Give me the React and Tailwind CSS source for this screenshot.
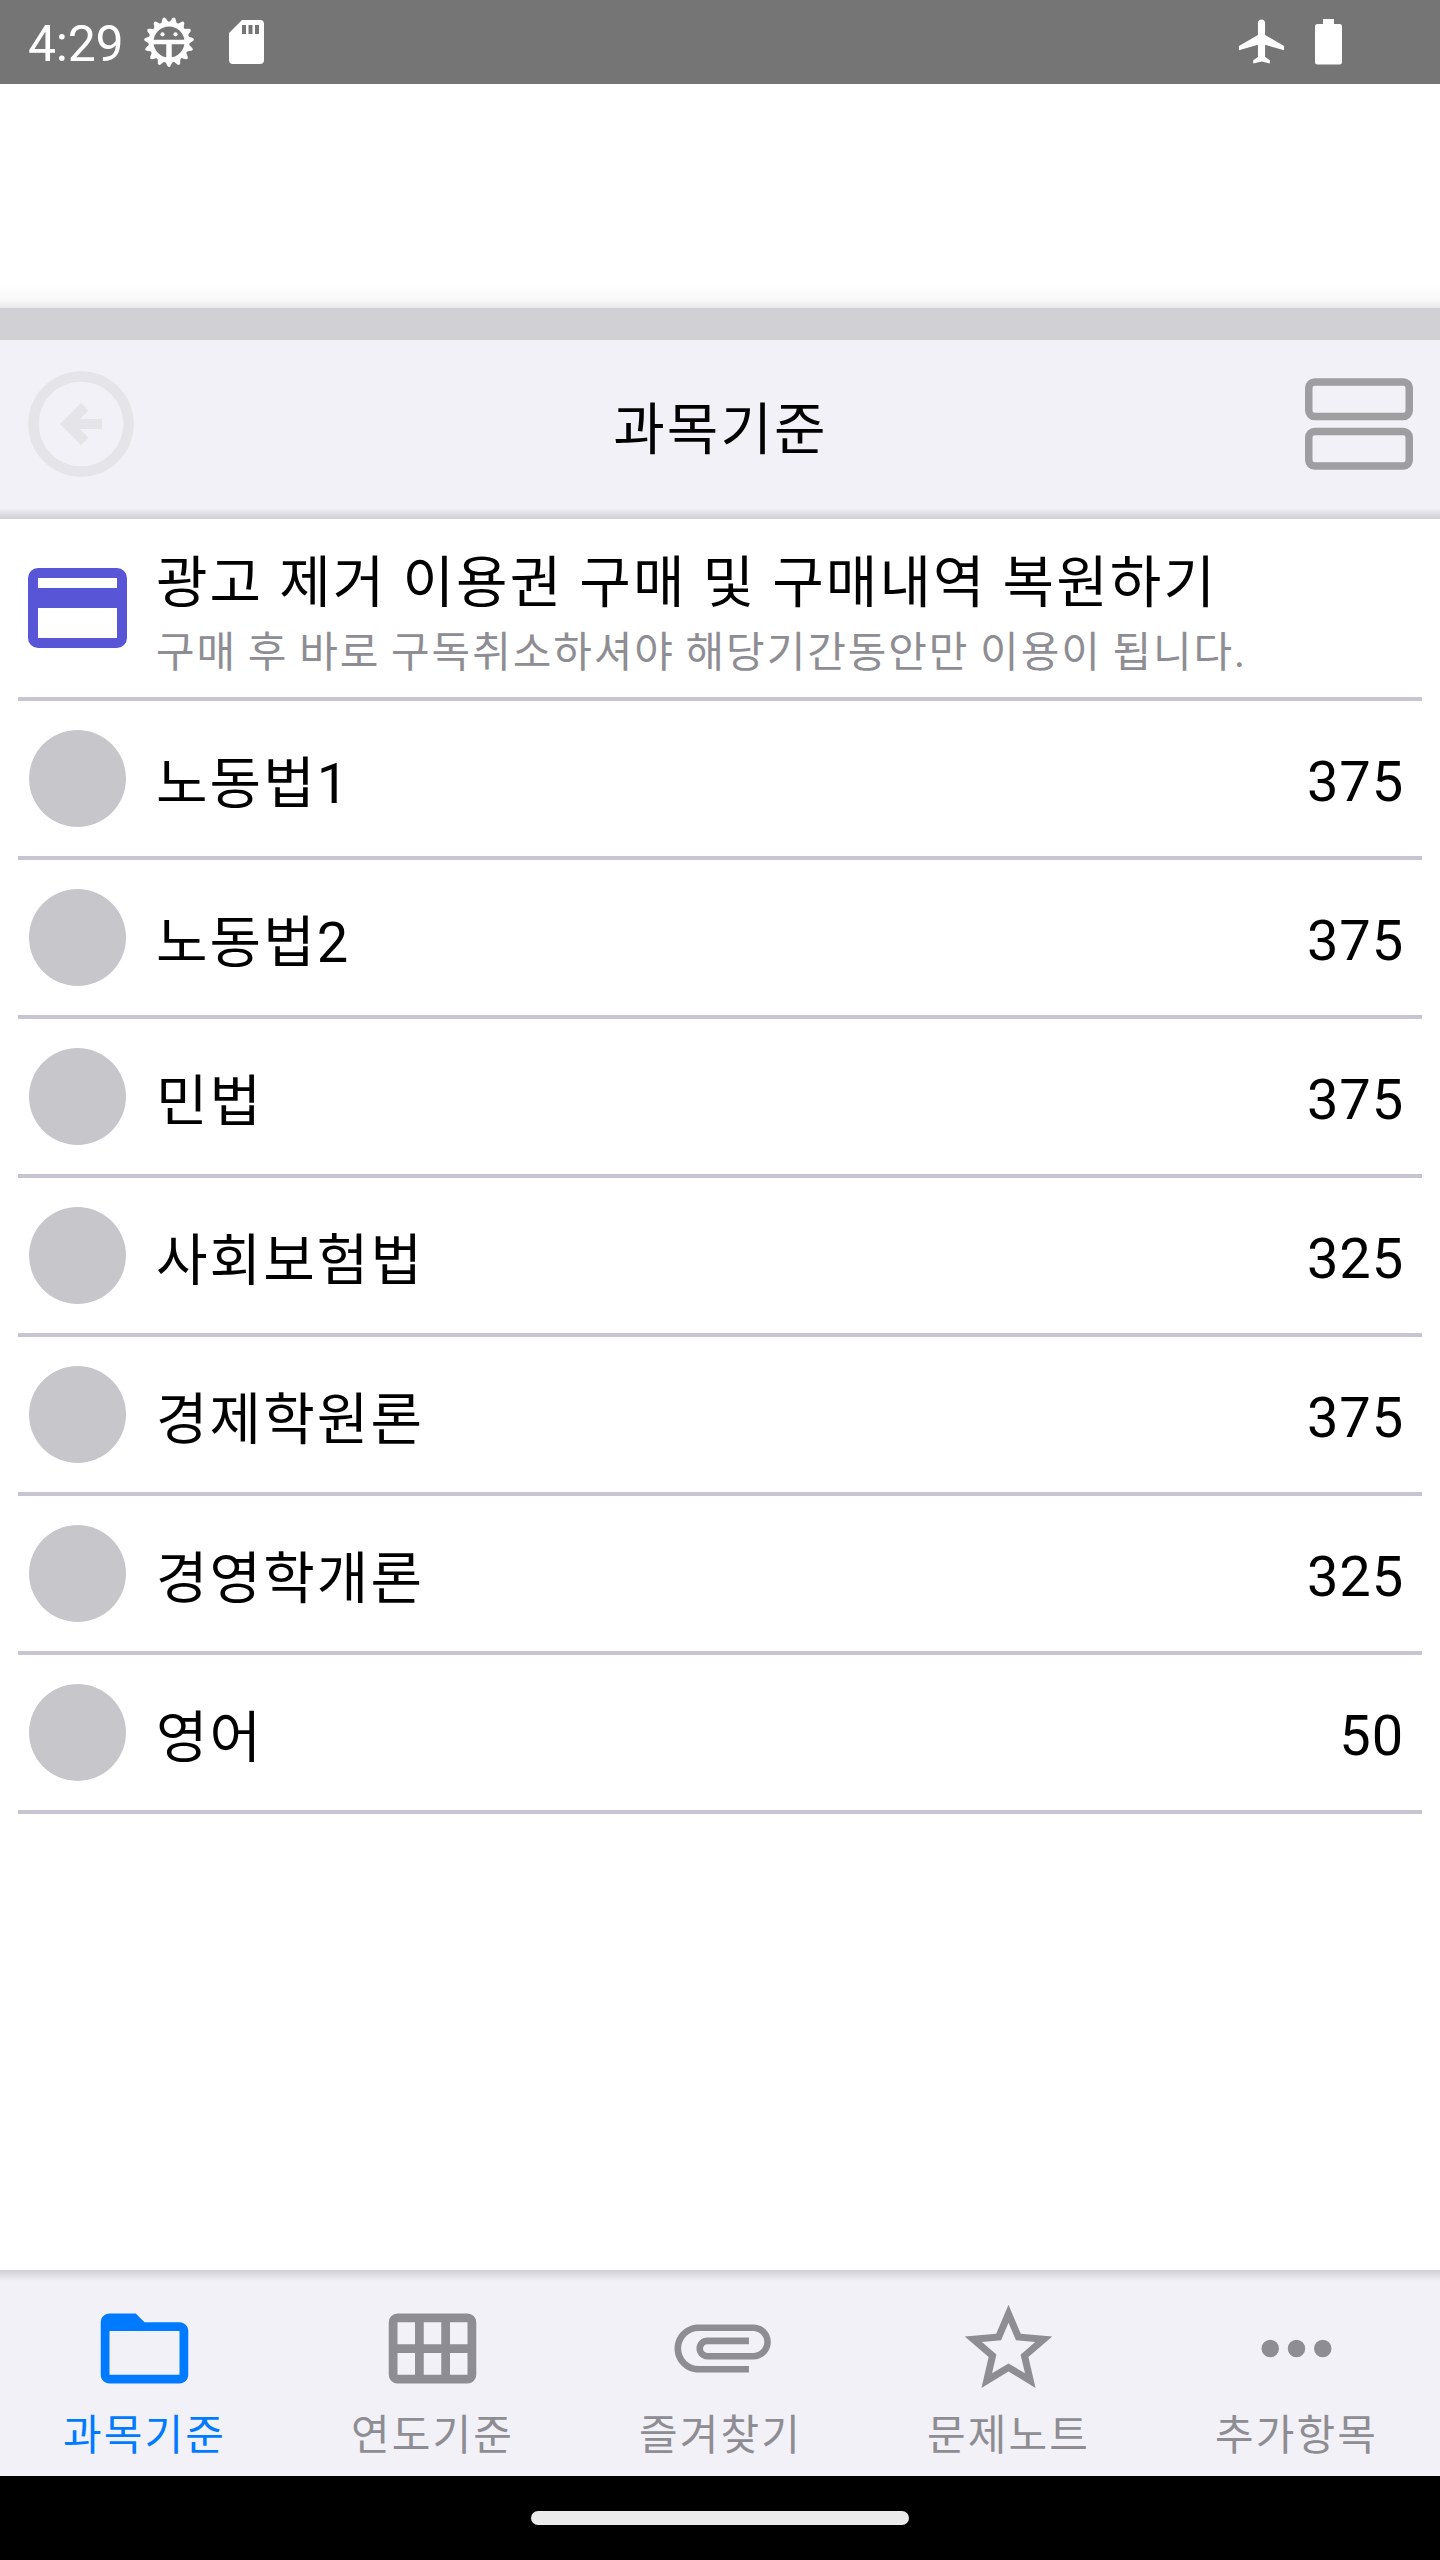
const subjects = [
  { name: '노동법1', count: 375 },
  { name: '노동법2', count: 375 },
  { name: '민법', count: 375 },
  { name: '사회보험법', count: 325 },
  { name: '경제학원론', count: 375 },
  { name: '경영학개론', count: 325 },
  { name: '영어', count: 50 },
]

const gearTeeth = Array.from({ length: 15 }, (_, i) => i * 24)

const tabs = [
  {
    label: '과목기준',
    active: true,
    icon: (
      <path fillRule="evenodd" d="M4 4h6l2 2h8c1.100 0 2 .9 2 2v10c0 1.100-.9 2-2 2H4c-1.100 0-2-.9-2-2V6c0-1.100.9-2 2-2zM4 8v10h16V8z" />
    ),
  },
  {
    label: '연도기준',
    icon: (
      <path fillRule="evenodd" d="M4 4h16a2 2 0 0 1 2 2v12a2 2 0 0 1-2 2H4a2 2 0 0 1-2-2V6a2 2 0 0 1 2-2zM4 6v5h4V6zM10 6v5h4V6zM16 6v5h4V6zM4 13v5h4v-5zM10 13v5h4v-5zM16 13v5h4v-5z" />
    ),
  },
  {
    label: '즐겨찾기',
    icon: (
      <path
        transform="translate(24.500 -.5) rotate(90)"
        d="M16.500 6v11.500c0 2.210-1.790 4-4 4s-4-1.790-4-4V5c0-1.380 1.120-2.500 2.500-2.500s2.500 1.120 2.500 2.500v10.500c0 .55-.45 1-1 1s-1-.45-1-1V6H10v9.500c0 1.380 1.120 2.500 2.500 2.500s2.500-1.120 2.500-2.500V5c0-2.210-1.790-4-4-4S7 2.790 7 5v12.500c0 3.040 2.460 5.500 5.500 5.500s5.500-2.460 5.500-5.500V6z"
      />
    ),
  },
  {
    label: '문제노트',
    icon: (
      <path d="M22 9.240l-7.190-.62L12 2 9.190 8.630 2 9.240l5.460 4.730L5.820 21 12 17.270 18.180 21l-1.630-7.030L22 9.240zM12 15.400l-3.760 2.270 1-4.280-3.320-2.880 4.380-.38L12 6.100l1.710 4.040 4.380.38-3.320 2.880 1 4.280L12 15.400z" />
    ),
  },
  {
    label: '추가항목',
    icon: (
      <path d="M6 10a2 2 0 1 0 0 4 2 2 0 0 0 0-4zM12 10a2 2 0 1 0 0 4 2 2 0 0 0 0-4zM18 10a2 2 0 1 0 0 4 2 2 0 0 0 0-4z" />
    ),
  },
]

function StatusBar() {
  return (
    <header className="flex h-[84px] shrink-0 items-center bg-[#757575] pl-7 text-white">
      <span className="pt-[3px] text-[50px] leading-none tracking-[-0.005em]">4:29</span>
      <svg className="ml-[21px] size-[50px]" viewBox="-25 -25 50 50">
        {gearTeeth.map((angle) => (
          <path key={angle} d="M-4.500 18L-1.500 24Q0 26 1.500 24L4.500 18z" fill="white" transform={`rotate(${angle})`} />
        ))}
        <circle r="18" fill="none" stroke="white" strokeWidth="5" />
        <path d="M-17 0H17" stroke="white" strokeWidth="4.500" />
        <path d="M0 0V17" stroke="white" strokeWidth="5.500" />
        <circle cx="-6.500" cy="-7.700" r="2.100" fill="white" />
        <circle cx="6.500" cy="-7.700" r="2.100" fill="white" />
      </svg>
      <svg className="ml-[35px] h-11 w-[35px]" viewBox="0 0 35 44">
        <path fill="white" fillRule="evenodd" d="M13 0H31a4 4 0 0 1 4 4V40a4 4 0 0 1-4 4H4a4 4 0 0 1-4-4V13zM13 5v9h4V5zM19.500 5v9h4V5zM26 5v9h4V5z" />
      </svg>
      <svg className="mb-px ml-auto h-[53px] w-[57px]" viewBox="0 0 24 24" preserveAspectRatio="none" fill="white">
        <path d="M21 16v-2l-8-5V3.500c0-.83-.67-1.500-1.500-1.500S10 2.670 10 3.500V9l-8 5v2l8-2.500V19l-2 1.500V22l3.500-1 3.500 1v-1.500L13 19v-5.500l8 2.500z" transform="translate(.5)" />
      </svg>
      <svg className="mr-[98px] ml-[25px] h-[46px] w-[27px]" viewBox="0.5 0 27 46" fill="white">
        <path d="M8.500 0h11v5H25a2.500 2.500 0 0 1 2.500 2.500V43a2.500 2.500 0 0 1-2.500 2.500H3A2.500 2.500 0 0 1 .5 43V7.500A2.500 2.500 0 0 1 3 5h5.500z" />
      </svg>
    </header>
  )
}

function TitleBar() {
  return (
    <div className="flex h-[179px] shrink-0 items-center justify-between bg-linear-to-t from-[#cfced4] to-[#f2f1f7] to-[11px] pr-[27px] pb-[11px] pl-7">
      <svg className="size-[106px]" viewBox="0 0 106 106" fill="#e5e4e9">
        <circle cx="53" cy="53" r="47.500" fill="none" stroke="#e5e4e9" strokeWidth="10.500" />
        <path d="M32 53l21-21 7.500 7.500L52 48h22v10H52l8.500 8.500L53 74z" />
      </svg>
      <h1 className="pt-3 pl-[2px] text-[56px] leading-none tracking-[0.0375em]">과목기준</h1>
      <svg className="h-[92px] w-[108px]" viewBox="0 0 108 92" fill="none" stroke="#9e9da2" strokeWidth="7.500">
        <rect x="3.750" y="4" width="100.500" height="34.500" rx="6" />
        <rect x="3.750" y="53.500" width="100.500" height="34.500" rx="6" />
      </svg>
    </div>
  )
}

export default function App() {
  return (
    <div className="flex h-[2560px] w-[1440px] flex-col overflow-hidden bg-white font-[Roboto,'Noto_Sans_CJK_KR',sans-serif] text-black">
      <StatusBar />
      <div className="h-[224px] shrink-0 bg-linear-to-t from-[#e8e8e8] via-[#f8f8f8] via-[8px] to-white to-[22px]" />
      <div className="h-8 shrink-0 bg-[#d1d0d5]" />
      <TitleBar />

      <main className="flex-1 px-[18px]">
        <section className="flex h-[182px] border-b-4 border-[#c9c4d1] pl-[10px]">
          <svg className="mt-[49px] h-20 w-[99px] shrink-0" viewBox="0 0 99 80">
            <path fill="#5856d6" fillRule="evenodd" d="M10 0H89a10 10 0 0 1 10 10V70a10 10 0 0 1-10 10H10A10 10 0 0 1 0 70V10A10 10 0 0 1 10 0zM10 10V20H89V10zM10 40V70H89V40z" />
          </svg>
          <div className="ml-[29px] pt-[31px] whitespace-nowrap">
            <p className="text-[56px] leading-[66px] tracking-[0.0375em]">광고 제거 이용권 구매 및 구매내역 복원하기</p>
            <p className="pt-1 text-[42px] leading-[66px] tracking-[0.045em] text-[#8e8d93] [word-spacing:-1.500px]">
              구매 후 바로 구독취소하셔야 해당기간동안만 이용이 됩니다.
            </p>
          </div>
        </section>
        <ul>
          {subjects.map((subject) => (
            <li key={subject.name} className="flex h-[159px] items-center border-b-4 border-[#c9c4d1] pr-[18px] pl-[11px] text-[56px]">
              <span className="size-[97px] rounded-full bg-[#c7c6cb]" />
              <span className="ml-[30px] pt-[11px] tracking-[0.0375em]">{subject.name}</span>
              <span className="ml-auto pt-[6px] tracking-[0.015em]">{subject.count}</span>
            </li>
          ))}
        </ul>
      </main>

      <nav className="grid h-[206px] shrink-0 grid-cols-5 bg-linear-to-b from-[#cfced4] to-[#f2f1f7] to-[11px]">
        {tabs.map((tab) => (
          <div
            key={tab.label}
            className={`flex flex-col items-center pt-[26px] ${tab.active ? 'text-[#007aff]' : 'text-[#8e8d93]'}`}
          >
            <svg className="ml-px size-[105px]" viewBox="0 0 24 24" fill="currentColor">
              {tab.icon}
            </svg>
            <span className="pt-[2px] pl-px text-[42px] leading-[66px] tracking-[0.05em]">{tab.label}</span>
          </div>
        ))}
      </nav>
      <div className="flex h-[84px] shrink-0 items-center justify-center bg-black">
        <div className="h-[14px] w-[378px] rounded-full bg-[#ebebeb]" />
      </div>
    </div>
  )
}
